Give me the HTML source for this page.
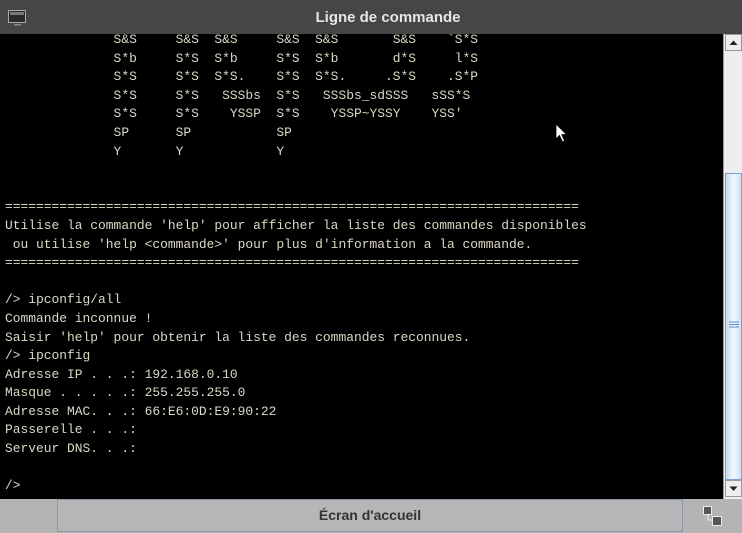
<!DOCTYPE html>
<html><head><meta charset="utf-8"><style>
*{margin:0;padding:0;box-sizing:border-box}
body{width:742px;height:533px;overflow:hidden;background:#b4b4b4;position:relative;font-family:"Liberation Sans",sans-serif}
#title{position:absolute;left:0;top:0;width:742px;height:34px;background:#464646;}
#title .t{position:absolute;left:0;width:776px;top:9px;text-align:center;color:#e6e6e6;font-weight:bold;font-size:15px}
#term{position:absolute;left:0;top:34px;width:723px;height:465px;background:#000;overflow:hidden}
pre{position:absolute;left:5px;top:-3px;font-family:"Liberation Mono",monospace;font-size:12.93px;line-height:18.6px;color:#dcd8c6;white-space:pre}
#sb{position:absolute;left:723px;top:34px;width:19px;height:465px;background:#eee;border-left:1px solid #999}
.btn{position:absolute;left:1px;width:17px;height:17px;background:#eee;border:1px solid #999}
#thumb{position:absolute;left:1px;top:139px;width:17px;height:307px;background:linear-gradient(90deg,#c6daf3,#f4f8fd 50%,#cfe0f5);border:1px solid #7f9fd0}
#bbtn{position:absolute;left:57px;top:499px;width:626px;height:33px;border:1px solid #8898a8;background:#b6b6b6;text-align:center;font-size:14px;font-weight:bold;color:#333;line-height:31px}
</style></head><body>
<div id="title">
<svg style="position:absolute;left:8px;top:10px" width="19" height="17"><rect x="0.5" y="0.5" width="17" height="12" fill="#2a2a2a" stroke="#aaa"/><rect x="2" y="2" width="14" height="3" fill="#777"/><rect x="6" y="14" width="7" height="1.5" fill="#888"/></svg>
<div class="t">Ligne de commande</div></div>
<div id="term"><pre>              S&amp;S     S&amp;S  S&amp;S     S&amp;S  S&amp;S       S&amp;S    `S*S
              S*b     S*S  S*b     S*S  S*b       d*S     l*S
              S*S     S*S  S*S.    S*S  S*S.     .S*S    .S*P
              S*S     S*S   SSSbs  S*S   SSSbs_sdSSS   sSS*S
              S*S     S*S    YSSP  S*S    YSSP~YSSY    YSS'
              SP      SP           SP
              Y       Y            Y


==========================================================================
Utilise la commande 'help' pour afficher la liste des commandes disponibles
 ou utilise 'help &lt;commande&gt;' pour plus d'information a la commande.
==========================================================================

/&gt; ipconfig/all
Commande inconnue !
Saisir 'help' pour obtenir la liste des commandes reconnues.
/&gt; ipconfig
Adresse IP . . .: 192.168.0.10
Masque . . . . .: 255.255.255.0
Adresse MAC. . .: 66:E6:0D:E9:90:22
Passerelle . . .:
Serveur DNS. . .:

/&gt;</pre>
<svg style="position:absolute;left:555px;top:89px" width="14" height="21"><path d="M1 1 L1 16 L4.5 12.5 L7.5 19 L9.5 18 L6.8 11.5 L11.5 11.5 Z" fill="#fff" stroke="#000" stroke-width="0.8"/></svg>
</div>
<div id="sb">
<div class="btn" style="top:0"><svg width="15" height="15"><path d="M3.5 10 L7.5 5.5 L11.5 10Z" fill="#222"/></svg></div>
<div id="thumb"><svg style="position:absolute;left:3px;top:147px" width="11" height="7"><path d="M0 1H10M0 3.5H10M0 6H10" stroke="#6688c8" stroke-width="1"/></svg></div>
<div class="btn" style="top:446px"><svg width="15" height="15"><path d="M3.5 5.5 L7.5 10 L11.5 5.5Z" fill="#222"/></svg></div>
</div>
<div id="bbtn">Écran d'accueil</div>
<svg style="position:absolute;left:703px;top:506px" width="22" height="22"><rect x="0.5" y="0.5" width="8" height="8" fill="#555" stroke="#eee"/><rect x="9.5" y="10.5" width="9" height="9" fill="#555" stroke="#eee"/><path d="M5 9V14H9" stroke="#eee" fill="none"/></svg>
</body></html>
